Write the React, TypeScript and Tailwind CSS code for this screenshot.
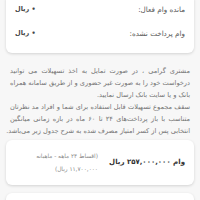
import React from "react";

const lines1 = [
  "مشتری گرامی ، در صورت تمایل به اخذ تسهیلات می توانید",
  "درخواست خود را به صورت غیر حضوری و از طریق سامانه همراه",
];
const lines2 = [
  "سقف مجموع تسهیلات قابل استفاده برای شما و افراد مد نظرتان",
  "متناسب با باز پرداخت‌های ۲۴ تا ۶۰ ماه در بازه زمانی میانگین",
  "انتخابی پس از کسر امتیاز مصرف شده به شرح جدول زیر می‌باشد.",
];

export default function App() {
  return (
    <div
      dir="rtl"
      className="w-[200px] h-[200px] overflow-hidden bg-[#f7f7f7] font-['DejaVu_Sans',sans-serif]"
    >
      <div className="mx-[6px] -mt-[2px] pb-[7px] bg-white rounded-b-[6px] shadow-[0_1px_3px_rgba(0,0,0,0.15)] px-[9px]">
        <div className="h-[24px] flex items-center justify-between">
          <span className="text-[7.2px] text-[#5a5a5a]">مانده وام فعال:</span>
          <span className="text-[6.5px] text-[#444] font-bold">• ریال</span>
        </div>
        <div className="h-[24px] flex items-center justify-between">
          <span className="text-[7.2px] text-[#5a5a5a]">وام پرداخت نشده:</span>
          <span className="text-[6.5px] text-[#444] font-bold">• ریال</span>
        </div>
      </div>

      <div className="mt-[12px] px-[10px] text-[6.6px] leading-[12px] text-[#747474]">
        {lines1.map((l) => (
          <div key={l} className="whitespace-nowrap text-justify [text-align-last:justify]">
            {l}
          </div>
        ))}
        <div className="whitespace-nowrap text-right">بانک و یا سایت بانک ارسال نمایید.</div>
        {lines2.map((l) => (
          <div key={l} className="whitespace-nowrap text-justify [text-align-last:justify]">
            {l}
          </div>
        ))}
      </div>

      <div className="mx-[6px] mt-[3px] h-[45px] bg-white rounded-[6px] shadow-[0_1px_3px_rgba(0,0,0,0.15)] flex items-center pr-[9px]">
        <span className="text-[7px] font-bold text-[#333] w-[87px]">وام ۲۵۷,۰۰۰,۰۰۰ ریال</span>
        <div className="flex flex-col text-[5.8px] leading-[13px] text-[#8a8a8a]">
          <span>(اقساط ۲۴ ماهه - ماهیانه</span>
          <span>۱۱,۷۰۰,۰۰۰ ریال)</span>
        </div>
      </div>

      <div className="mx-[6px] mt-[8px] h-[45px] bg-white rounded-[6px] shadow-[0_1px_3px_rgba(0,0,0,0.15)]" />
    </div>
  );
}
